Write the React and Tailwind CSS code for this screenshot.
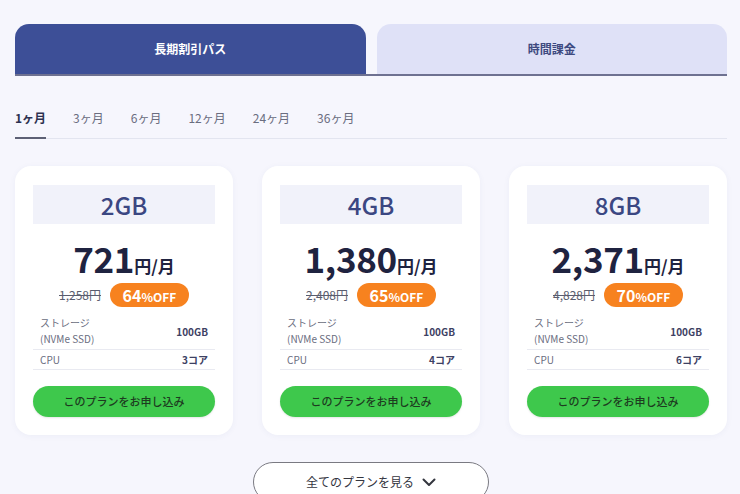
import React, { useState } from 'react';

const plans = [
  { id: 1, size: '2GB', price: '721', was: '1,258円', off: '64', storage: '100GB', cpu: '3コア' },
  { id: 2, size: '4GB', price: '1,380', was: '2,408円', off: '65', storage: '100GB', cpu: '4コア' },
  { id: 3, size: '8GB', price: '2,371', was: '4,828円', off: '70', storage: '100GB', cpu: '6コア' },
];

const periods = ['1ヶ月', '3ヶ月', '6ヶ月', '12ヶ月', '24ヶ月', '36ヶ月'];

const PlanCard = ({ plan }) => (
  <div className="bg-white rounded-2xl px-[18px] pt-[19px] pb-[18px] shadow-[0_1px_6px_rgba(60,70,140,0.05)]">
    <div className="h-[39px] bg-[#f1f2fa] flex items-center justify-center text-[24px] font-medium text-[#3b4782] leading-none">
      {plan.size}
    </div>
    <div className="mt-[14px] flex items-baseline justify-center text-[#1f2340] h-[40px]">
      <span className="text-[35px] font-bold leading-[40px] tracking-[-0.3px]">{plan.price}</span>
      <span className="text-[17px] font-bold">円/月</span>
    </div>
    <div className="mt-[5px] flex items-center justify-center gap-[9px]">
      <span className="text-[12px] text-[#5a5d6e] line-through">{plan.was}</span>
      <span className="h-[24px] w-[79px] rounded-full bg-[#f7821f] text-white font-bold flex items-baseline justify-center pt-[1px]">
        <span className="text-[16px] leading-[22px]">{plan.off}</span>
        <span className="text-[12px]">%OFF</span>
      </span>
    </div>
    <div className="mt-[6px] text-[10px]">
      <div className="flex items-center justify-between border-b border-[#e9eaf1] px-[7px] py-[2px]">
        <div className="text-[#6a6d80] leading-[16px]">
          <div>ストレージ</div>
          <div>(NVMe SSD)</div>
        </div>
        <span className="font-bold text-[#3d4163]">{plan.storage}</span>
      </div>
      <div className="flex items-center justify-between border-b border-[#e9eaf1] px-[7px] h-[20px]">
        <span className="text-[#6a6d80]">CPU</span>
        <span className="font-bold text-[#3d4163]">{plan.cpu}</span>
      </div>
    </div>
    <button className="mt-[16px] w-full h-[31px] rounded-full bg-[#3ec84c] text-[11px] font-medium text-[#1d3b20] shadow-[0_1px_2px_rgba(0,0,0,0.1)]">
      このプランをお申し込み
    </button>
  </div>
);

const App = () => {
  const [tab, setTab] = useState(0);
  const [period, setPeriod] = useState(0);

  return (
    <div
      className="min-h-[494px] bg-[#f6f6fd] pl-[15px] pr-[13px] pt-[24px]"
      style={{ fontFamily: '"Noto Sans CJK JP", "Noto Sans", sans-serif' }}
    >
      {/* Billing tabs */}
      <div className="flex gap-[11px] border-b-2 border-[#6e7191]">
        <button
          onClick={() => setTab(0)}
          className={`flex-1 h-[50px] rounded-t-[14px] text-[12px] font-bold ${tab === 0 ? 'bg-[#3d4f97] text-white' : 'bg-[#dfe1f7] text-[#3e4a80]'}`}
        >
          長期割引パス
        </button>
        <button
          onClick={() => setTab(1)}
          className={`flex-1 h-[50px] rounded-t-[14px] text-[12px] font-bold ${tab === 1 ? 'bg-[#3d4f97] text-white' : 'bg-[#dfe1f7] text-[#3e4a80]'}`}
        >
          時間課金
        </button>
      </div>

      {/* Period tabs */}
      <div className="mt-[34px] flex gap-[27px] border-b border-[#e3e5f0]">
        {periods.map((p, i) => (
          <button
            key={p}
            onClick={() => setPeriod(i)}
            className={`pb-[11px] text-[12px] leading-[16px] -mb-px ${period === i ? 'font-bold text-[#2d3150] border-b-2 border-[#5d6075]' : 'text-[#6a6d80] border-b-2 border-transparent'}`}
          >
            {p}
          </button>
        ))}
      </div>

      {/* Plans */}
      <div className="mt-[27px] grid grid-cols-3 gap-[29px]">
        {plans.map(plan => (
          <PlanCard key={plan.id} plan={plan} />
        ))}
      </div>

      <div className="mt-[27px] flex justify-center">
        <button className="w-[236px] h-[40px] rounded-full border border-[#7a7a82] bg-white flex items-center justify-center gap-[8px] text-[12px] text-[#34363f]">
          全てのプランを見る
          <svg width="14" height="9" viewBox="0 0 14 9" fill="none" stroke="#34363f" strokeWidth="2" strokeLinecap="round" strokeLinejoin="round">
            <path d="M1.5 1.5 7 7l5.5-5.5" />
          </svg>
        </button>
      </div>
    </div>
  );
};

export default App;
